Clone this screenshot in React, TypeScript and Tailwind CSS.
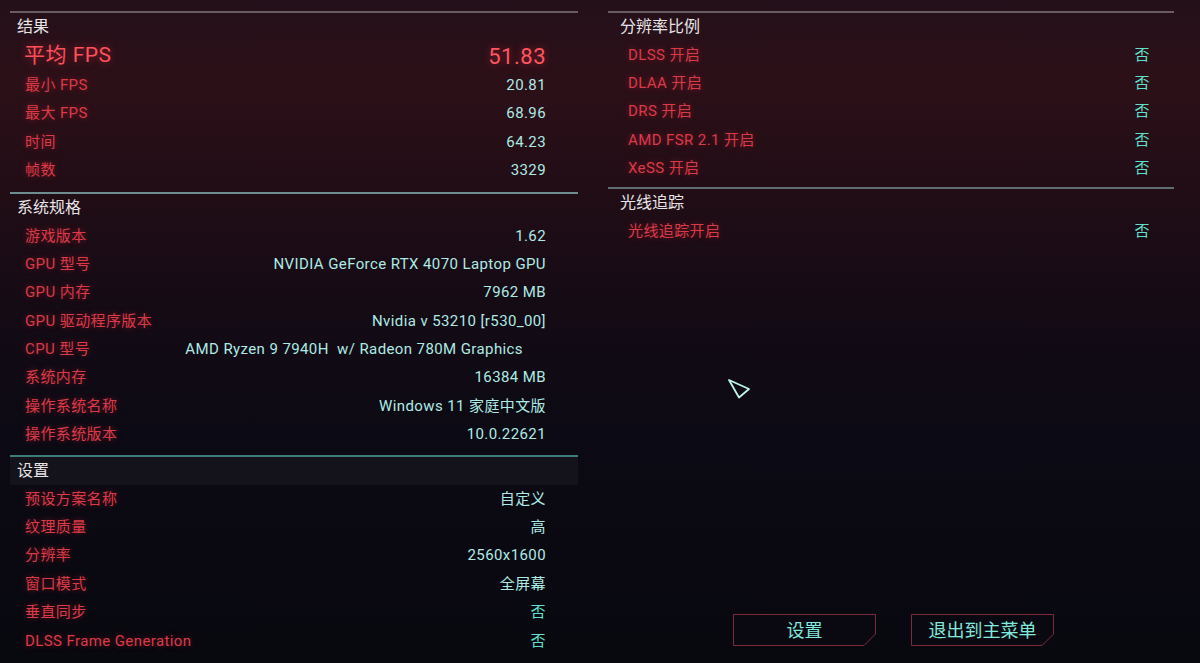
import React from "react";

type Row = { label: string; value: string; valueClass?: string };

const results: Row[] = [
  { label: "最小 FPS", value: "20.81" },
  { label: "最大 FPS", value: "68.96" },
  { label: "时间", value: "64.23" },
  { label: "帧数", value: "3329" },
];

const specs: Row[] = [
  { label: "游戏版本", value: "1.62" },
  { label: "GPU 型号", value: "NVIDIA GeForce RTX 4070 Laptop GPU" },
  { label: "GPU 内存", value: "7962 MB" },
  { label: "GPU 驱动程序版本", value: "Nvidia v 53210 [r530_00]" },
  { label: "CPU 型号", value: "AMD Ryzen 9 7940H  w/ Radeon 780M Graphics", valueClass: "mr-[23px] whitespace-pre" },
  { label: "系统内存", value: "16384 MB" },
  { label: "操作系统名称", value: "Windows 11 家庭中文版" },
  { label: "操作系统版本", value: "10.0.22621" },
];

const settings: Row[] = [
  { label: "预设方案名称", value: "自定义" },
  { label: "纹理质量", value: "高" },
  { label: "分辨率", value: "2560x1600" },
  { label: "窗口模式", value: "全屏幕" },
  { label: "垂直同步", value: "否" },
  { label: "DLSS Frame Generation", value: "否" },
];

const scaling: Row[] = [
  { label: "DLSS 开启", value: "否" },
  { label: "DLAA 开启", value: "否" },
  { label: "DRS 开启", value: "否" },
  { label: "AMD FSR 2.1 开启", value: "否" },
  { label: "XeSS 开启", value: "否" },
];

const font = "font-['Roboto','Noto_Sans_CJK_SC',sans-serif]";

function DataRow({ row, right }: { row: Row; right?: boolean }) {
  return (
    <div
      className={`flex items-center justify-between tracking-[0.4px] ${
        right ? "h-[28.3px] pl-[20px] pr-[24px]" : "h-[28.4px] pl-[15px] pr-[32px]"
      }`}
    >
      <span className="text-[15px] text-[#da3a48] [text-shadow:0_0_6px_rgba(255,40,60,0.4)]">{row.label}</span>
      <span
        className={`text-[15px] ${row.value === "否" ? "text-[#5fe0cd]" : "text-[#aeeae4]"} ${row.valueClass ?? ""}`}
      >
        {row.value}
      </span>
    </div>
  );
}

function Header({ title, band, right }: { title: string; band?: boolean; right?: boolean }) {
  return (
    <div
      className={`flex h-[28px] items-center ${right ? "pl-[12px]" : "pl-[7px]"} ${band ? "bg-white/[0.035]" : ""}`}
    >
      <span className="text-[16px] text-[#e6e4e6]">{title}</span>
    </div>
  );
}

function Line({ color }: { color: string }) {
  return <div className={`h-[2px] w-full ${color}`} />;
}

function CutButton({ label }: { label: string }) {
  return (
    <button className="relative flex h-[32px] w-[143px] items-center justify-center bg-[#0c0a13]/70">
      <svg className="absolute inset-0" width="143" height="32" viewBox="0 0 143 32">
        <path d="M0.5 0.5 H142.5 V20 L131 31.5 H0.5 Z" fill="none" stroke="#7b2c38" strokeWidth="1" />
      </svg>
      <span className="relative text-[18px] text-[#7fe9dc]">{label}</span>
    </button>
  );
}

export default function App() {
  return (
    <div
      className={`relative flex h-[663px] w-[1200px] overflow-hidden bg-[linear-gradient(to_bottom,#24101a_0%,#2c1018_12%,#220d16_28%,#150b15_45%,#0c0a14_65%,#08080f_100%)] pt-[11px] ${font}`}
    >
      {/* left column */}
      <div className="ml-[10px] flex w-[568px] flex-col">
        <Line color="bg-[#6a5a62]" />
        <Header title="结果" />
        <div className="flex h-[30px] items-center justify-between pl-[14px] pr-[32px] tracking-[0.5px]">
          <span className="text-[21px] text-[#ff4f5a] [text-shadow:0_0_8px_rgba(255,50,70,0.5)]">平均 FPS</span>
          <span className="text-[22px] text-[#ff5560] [text-shadow:0_0_8px_rgba(255,50,70,0.5)]">51.83</span>
        </div>
        {results.map((r) => (
          <DataRow key={r.label} row={r} />
        ))}
        <div className="h-[7px]" />
        <Line color="bg-[#6f8c8e]" />
        <Header title="系统规格" />
        {specs.map((r) => (
          <DataRow key={r.label} row={r} />
        ))}
        <div className="h-[6px]" />
        <Line color="bg-[#3e7c79]" />
        <Header title="设置" band />
        {settings.map((r) => (
          <DataRow key={r.label} row={r} />
        ))}
      </div>

      {/* right column */}
      <div className="ml-[30px] flex w-[566px] flex-col">
        <Line color="bg-[#6a5a62]" />
        <Header title="分辨率比例" right />
        {scaling.map((r) => (
          <DataRow key={r.label} row={r} right />
        ))}
        <div className="h-[5px]" />
        <Line color="bg-[#5f6c70]" />
        <Header title="光线追踪" right />
        <DataRow row={{ label: "光线追踪开启", value: "否" }} right />
        <div className="flex-1" />
        <div className="flex justify-end gap-[35px] pb-[17px] pr-[120px]">
          <CutButton label="设置" />
          <CutButton label="退出到主菜单" />
        </div>
      </div>

      {/* mouse cursor */}
      <svg className="absolute left-[726px] top-[378px]" width="26" height="24" viewBox="0 0 26 24">
        <path d="M3 2 L23 11 L13 19.5 Z" fill="none" stroke="#bff3ec" strokeWidth="1.8" strokeLinejoin="round" />
      </svg>
    </div>
  );
}
